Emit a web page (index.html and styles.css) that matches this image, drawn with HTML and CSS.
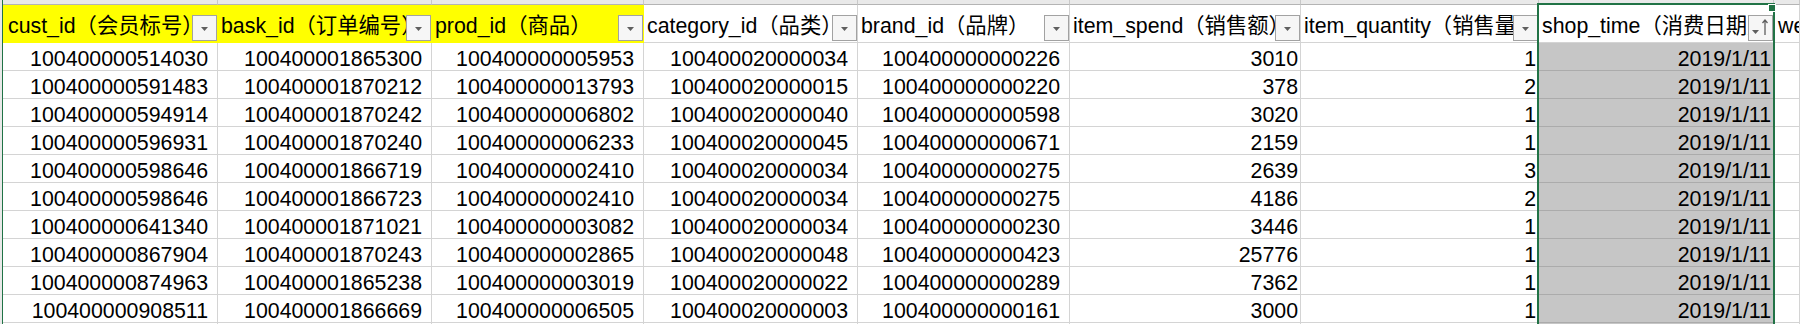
FILE: index.html
```html
<!DOCTYPE html>
<html lang="zh">
<head>
<meta charset="utf-8">
<title>Sheet</title>
<link rel="stylesheet" href="styles.css">
</head>
<body>
<div class="sheet">
  <div class="rowhead-edge"></div>
  <div class="grid">
    <div class="strip"></div><div class="strip"></div><div class="strip"></div><div class="strip"></div><div class="strip"></div><div class="strip"></div><div class="strip"></div><div class="strip"></div><div class="strip"></div>

    <div class="hd yellow first">cust_id（会员标号）<span class="fbtn"><svg width="7" height="4" viewBox="0 0 7 4"><polygon points="0,0 7,0 3.5,4" fill="#5f5f5f"/></svg></span></div>
    <div class="hd yellow">bask_id（订单编号）<span class="fbtn"><svg width="7" height="4" viewBox="0 0 7 4"><polygon points="0,0 7,0 3.5,4" fill="#5f5f5f"/></svg></span></div>
    <div class="hd yellow">prod_id（商品）<span class="fbtn"><svg width="7" height="4" viewBox="0 0 7 4"><polygon points="0,0 7,0 3.5,4" fill="#5f5f5f"/></svg></span></div>
    <div class="hd">category_id（品类）<span class="fbtn"><svg width="7" height="4" viewBox="0 0 7 4"><polygon points="0,0 7,0 3.5,4" fill="#5f5f5f"/></svg></span></div>
    <div class="hd">brand_id（品牌）<span class="fbtn"><svg width="7" height="4" viewBox="0 0 7 4"><polygon points="0,0 7,0 3.5,4" fill="#5f5f5f"/></svg></span></div>
    <div class="hd">item_spend（销售额）<span class="fbtn"><svg width="7" height="4" viewBox="0 0 7 4"><polygon points="0,0 7,0 3.5,4" fill="#5f5f5f"/></svg></span></div>
    <div class="hd">item_quantity（销售量）<span class="fbtn"><svg width="7" height="4" viewBox="0 0 7 4"><polygon points="0,0 7,0 3.5,4" fill="#5f5f5f"/></svg></span></div>
    <div class="hd">shop_time（消费日期）<span class="fbtn sort"><svg width="23" height="24" viewBox="0 0 23 24"><polygon points="3,14 10,14 6.5,18" fill="#5f5f5f"/><path d="M16 4 V19 M13.5 7 L16 4 L18.5 7" stroke="#5f5f5f" stroke-width="1.3" fill="none"/></svg></span></div>
    <div class="hd last">week</div>

    <div class="c id">100400000514030</div><div class="c id">100400001865300</div><div class="c id">100400000005953</div><div class="c id">100400020000034</div><div class="c id">100400000000226</div><div class="c num">3010</div><div class="c num">1</div><div class="c num sel">2019/1/11</div><div class="c"></div>
    <div class="c id">100400000591483</div><div class="c id">100400001870212</div><div class="c id">100400000013793</div><div class="c id">100400020000015</div><div class="c id">100400000000220</div><div class="c num">378</div><div class="c num">2</div><div class="c num sel">2019/1/11</div><div class="c"></div>
    <div class="c id">100400000594914</div><div class="c id">100400001870242</div><div class="c id">100400000006802</div><div class="c id">100400020000040</div><div class="c id">100400000000598</div><div class="c num">3020</div><div class="c num">1</div><div class="c num sel">2019/1/11</div><div class="c"></div>
    <div class="c id">100400000596931</div><div class="c id">100400001870240</div><div class="c id">100400000006233</div><div class="c id">100400020000045</div><div class="c id">100400000000671</div><div class="c num">2159</div><div class="c num">1</div><div class="c num sel">2019/1/11</div><div class="c"></div>
    <div class="c id">100400000598646</div><div class="c id">100400001866719</div><div class="c id">100400000002410</div><div class="c id">100400020000034</div><div class="c id">100400000000275</div><div class="c num">2639</div><div class="c num">3</div><div class="c num sel">2019/1/11</div><div class="c"></div>
    <div class="c id">100400000598646</div><div class="c id">100400001866723</div><div class="c id">100400000002410</div><div class="c id">100400020000034</div><div class="c id">100400000000275</div><div class="c num">4186</div><div class="c num">2</div><div class="c num sel">2019/1/11</div><div class="c"></div>
    <div class="c id">100400000641340</div><div class="c id">100400001871021</div><div class="c id">100400000003082</div><div class="c id">100400020000034</div><div class="c id">100400000000230</div><div class="c num">3446</div><div class="c num">1</div><div class="c num sel">2019/1/11</div><div class="c"></div>
    <div class="c id">100400000867904</div><div class="c id">100400001870243</div><div class="c id">100400000002865</div><div class="c id">100400020000048</div><div class="c id">100400000000423</div><div class="c num">25776</div><div class="c num">1</div><div class="c num sel">2019/1/11</div><div class="c"></div>
    <div class="c id">100400000874963</div><div class="c id">100400001865238</div><div class="c id">100400000003019</div><div class="c id">100400020000022</div><div class="c id">100400000000289</div><div class="c num">7362</div><div class="c num">1</div><div class="c num sel">2019/1/11</div><div class="c"></div>
    <div class="c id">100400000908511</div><div class="c id">100400001866669</div><div class="c id">100400000006505</div><div class="c id">100400020000003</div><div class="c id">100400000000161</div><div class="c num">3000</div><div class="c num">1</div><div class="c num sel">2019/1/11</div><div class="c"></div>
    <div class="c"></div><div class="c"></div><div class="c"></div><div class="c"></div><div class="c"></div><div class="c"></div><div class="c"></div><div class="c sel"></div><div class="c"></div>
  </div>
  <div class="selection"><span class="handle"></span></div>
</div>
</body>
</html>
```

FILE: styles.css
```css
html, body {
  margin: 0;
  padding: 0;
  background: #ffffff;
  overflow: hidden;
}

.sheet {
  position: relative;
  display: flex;
  width: 1800px;
  height: 324px;
  overflow: hidden;
  font-family: "Liberation Sans", "Noto Sans CJK SC", sans-serif;
  font-size: 21.33px;
  color: #000000;
}

.rowhead-edge {
  flex: 0 0 2px;
  background: #e9e9e9;
  border-right: 1px solid #217346;
}

.grid {
  flex: 1 1 auto;
  display: grid;
  grid-template-columns: 215px 214px 212px 214px 212px 231px 238px 235px 1fr;
  grid-auto-rows: 28px;
  grid-template-rows: 5px 38px;
  align-content: start;
}

.strip {
  background: #e9e9e9;
  border-right: 1px solid #c8c8c8;
  border-bottom: 1px solid #b4b4b4;
}

.hd,
.c {
  position: relative;
  display: flex;
  align-items: flex-end;
  overflow: hidden;
  white-space: nowrap;
  line-height: 22px;
  border-right: 1px solid #d4d4d4;
  border-bottom: 1px solid #d4d4d4;
}

.hd {
  padding: 0 0 5px 3px;
  background: #ffffff;
}

.hd.first {
  padding-left: 5px;
}

.hd.yellow {
  background: #ffff00;
  border-right-color: #ffff00;
  border-bottom-color: #ffff00;
}

.hd.last {
  padding-left: 4px;
}

.c.id {
  justify-content: flex-end;
  padding-right: 9px;
}

.c.num {
  justify-content: flex-end;
  padding-right: 2px;
}

.c.sel {
  background: #c6c6c6;
  border-bottom-color: #ababab;
}

.fbtn {
  position: absolute;
  right: 0;
  bottom: 1px;
  width: 25px;
  height: 26px;
  box-sizing: border-box;
  border: 1px solid #a2a2a2;
  background: #f6f6f6;
  display: flex;
  align-items: center;
  justify-content: center;
  padding-top: 2px;
}

.fbtn.sort {
  padding: 0;
}

.fbtn svg {
  display: block;
}

.selection {
  position: absolute;
  left: 1537px;
  top: 3px;
  width: 238px;
  height: 400px;
  box-sizing: border-box;
  border: 2px solid #217346;
  pointer-events: none;
}

.handle {
  position: absolute;
  right: -3px;
  top: -1px;
  width: 6px;
  height: 6px;
  background: #217346;
  border: 1px solid #ffffff;
}
```
